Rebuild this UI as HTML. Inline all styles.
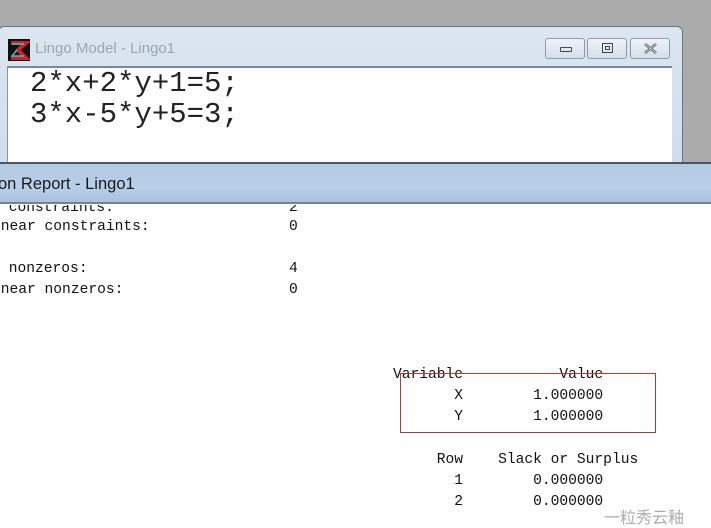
<!DOCTYPE html>
<html><head><meta charset="utf-8"><style>
*{margin:0;padding:0;box-sizing:border-box}
body{width:711px;height:520px;overflow:hidden;background:#fff;position:relative;font-family:"Liberation Sans",sans-serif}
.bg{position:absolute;left:0;top:0;width:711px;height:163px;background:#ababab}
.win{position:absolute;left:-2px;top:26px;width:685px;height:150px;background:linear-gradient(#dbe6f1,#cfdceb);border:1px solid #6b7480;border-radius:6px 6px 0 0}
.ed{position:absolute;left:7px;top:66px;width:665px;height:100px;background:#fff;border-top:2px solid #7d8894;border-left:1px solid #8a95a0}
.code{position:absolute;left:30px;font-family:"Liberation Mono",monospace;font-size:29px;color:#222}
.t1{position:absolute;left:35px;top:40px;font-size:15px;color:#9aa6b2}
.btn{position:absolute;top:38px;width:40px;height:21px;border:1px solid #8e9cad;border-radius:3px;background:linear-gradient(#eef3f8,#d4dfeb)}
.rep{position:absolute;left:0;top:162px;width:711px;height:42px;background:linear-gradient(#b2c9e3,#b8cfe8 60%,#aac2de);border-top:2px solid #4e5560;border-bottom:2px solid #77808c}
.rt{position:absolute;left:-2px;top:175px;font-size:16.5px;color:#1a1a1a}
.m{position:absolute;font-family:"Liberation Mono",monospace;font-size:14.6px;color:#111;white-space:pre;line-height:16px}
.box{position:absolute;left:400px;top:373px;width:256px;height:60px;border:1px solid #b03a3a}
</style></head><body>
<div class="bg"></div>
<div class="win"></div>
<svg style="position:absolute;left:8px;top:39px" width="22" height="22"><rect width="22" height="22" fill="#111"/><path d="M3 4H18L10 11L18 19H3" fill="none" stroke="#d0202a" stroke-width="4"/><path d="M4 5H16M9 11L4 17H16" stroke="#34c8c8" stroke-width="1.5" fill="none"/></svg>
<div class="t1">Lingo Model - Lingo1</div>
<div class="btn" style="left:545px"><div style="position:absolute;left:14px;top:8px;width:12px;height:5px;border:1px solid #445;border-radius:1px"></div></div>
<div class="btn" style="left:587px"><div style="position:absolute;left:14px;top:4px;width:11px;height:10px;border:1px solid #445"></div><div style="position:absolute;left:17px;top:7px;width:5px;height:4px;border:1px solid #445"></div></div>
<div class="btn" style="left:630px"><svg style="position:absolute;left:13px;top:4px" width="13" height="11"><path d="M1 1L12 10M12 1L1 10" stroke="#5a6170" stroke-width="2.5"/><path d="M1 1L12 10M12 1L1 10" stroke="#e8eef5" stroke-width="0.8"/></svg></div>
<div class="ed"></div>
<div class="code" style="top:67px">2*x+2*y+1=5;</div>
<div class="code" style="top:98px">3*x-5*y+5=3;</div>
<div class="rep"></div>
<div class="rt">on Report - Lingo1</div>
<div class="m" style="left:0;top:200px;clip-path:inset(5px 0 0 0)"> constraints:</div>
<div class="m" style="left:289px;top:200px;clip-path:inset(5px 0 0 0)">2</div>
<div class="m" style="left:-8px;top:219px">inear constraints:</div>
<div class="m" style="left:289px;top:219px">0</div>
<div class="m" style="left:0;top:261px"> nonzeros:</div>
<div class="m" style="left:289px;top:261px">4</div>
<div class="m" style="left:-8px;top:282px">inear nonzeros:</div>
<div class="m" style="left:289px;top:282px">0</div>
<div class="m" style="left:393px;top:367px">Variable           Value</div>
<div class="m" style="left:393px;top:388px">       X        1.000000</div>
<div class="m" style="left:393px;top:409px">       Y        1.000000</div>
<div class="m" style="left:393px;top:452px">     Row    Slack or Surplus</div>
<div class="m" style="left:393px;top:473px">       1        0.000000</div>
<div class="m" style="left:393px;top:494px">       2        0.000000</div>
<div class="box"></div>
<div style="position:absolute;left:604px;top:504px;font-family:'Liberation Sans','Noto Sans CJK SC',sans-serif;font-size:16px;color:#999;opacity:.8">一粒秀云釉</div>
</body></html>
